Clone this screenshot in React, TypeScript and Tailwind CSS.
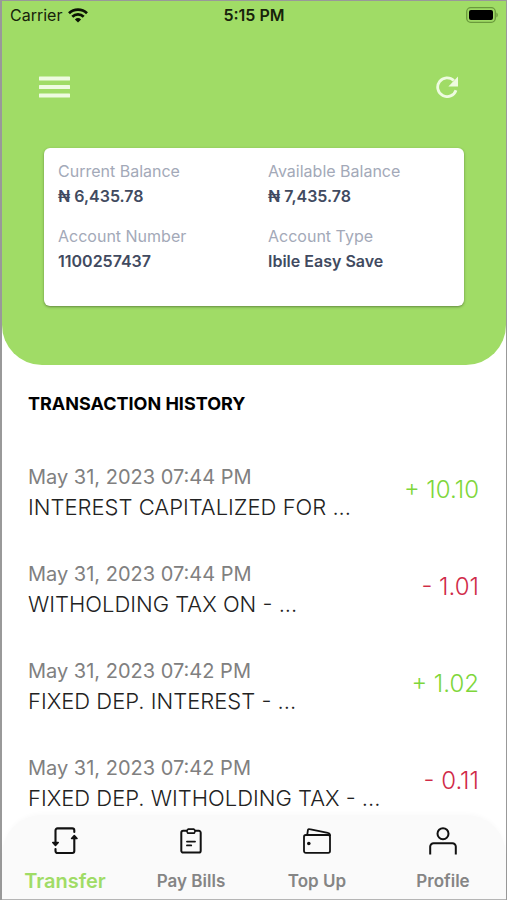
import React from "react";

const accountDetails = [
  { label: "Current Balance", value: "₦ 6,435.78" },
  { label: "Available Balance", value: "₦ 7,435.78" },
  { label: "Account Number", value: "1100257437" },
  { label: "Account Type", value: "Ibile Easy Save" },
];

const transactions = [
  {
    id: 1,
    date: "May 31, 2023 07:44 PM",
    title: "INTEREST CAPITALIZED FOR ...",
    amount: "+ 10.10",
    credit: true,
  },
  {
    id: 2,
    date: "May 31, 2023 07:44 PM",
    title: "WITHOLDING TAX ON - ...",
    amount: "- 1.01",
    credit: false,
  },
  {
    id: 3,
    date: "May 31, 2023 07:42 PM",
    title: "FIXED DEP. INTEREST - ...",
    amount: "+ 1.02",
    credit: true,
  },
  {
    id: 4,
    date: "May 31, 2023 07:42 PM",
    title: "FIXED DEP. WITHOLDING TAX - ...",
    amount: "- 0.11",
    credit: false,
  },
];

const tabs = [
  { name: "Transfer", icon: <TransferIcon /> },
  { name: "Pay Bills", icon: <ClipboardIcon /> },
  { name: "Top Up", icon: <WalletIcon /> },
  { name: "Profile", icon: <ProfileIcon /> },
];

export default function App() {
  return (
    <div className="flex min-h-screen flex-col border-t border-r border-l-2 border-[#999999] bg-white font-['Inter','Open_Sans',sans-serif]">
      <Header />
      <TransactionHistory />
      <TabBar />
    </div>
  );
}

function Header() {
  return (
    <header className="rounded-b-[40px] bg-[#a0dc66] pb-[59px]">
      <StatusBar />
      <div className="flex items-center justify-between pt-10 pr-12 pl-[37px]">
        <button aria-label="Menu" className="flex h-9 items-center">
          <MenuIcon />
        </button>
        <button aria-label="Refresh" className="flex h-9 items-center">
          <RefreshIcon />
        </button>
      </div>
      <dl className="mx-[42px] mt-[43px] grid grid-cols-2 gap-y-[15px] rounded-md bg-white pt-[11px] pb-8 shadow-sm shadow-black/30">
        {accountDetails.map(({ label, value }) => (
          <div key={label} className="pl-3.5">
            <dt className="text-base leading-[25px] text-[#a3a9b8]">{label}</dt>
            <dd className="text-base leading-[25px] font-semibold text-[#414a60]">
              {value}
            </dd>
          </div>
        ))}
      </dl>
    </header>
  );
}

function StatusBar() {
  return (
    <div className="grid h-7 grid-cols-3 items-center px-2 text-[#17230a]">
      <div className="flex items-center gap-1.5 text-base">
        <span>Carrier</span>
        <WifiIcon />
      </div>
      <span className="text-center text-base font-semibold">5:15 PM</span>
      <div className="flex justify-end">
        <BatteryIcon />
      </div>
    </div>
  );
}

function TransactionHistory() {
  return (
    <main className="pr-[27px] pl-[26px]">
      <h1 className="pt-[27px] text-lg leading-6 font-bold text-black">
        TRANSACTION HISTORY
      </h1>
      <ul className="mt-[46px] flex flex-col gap-[37px]">
        {transactions.map(({ id, date, title, amount, credit }) => (
          <li key={id} className="flex items-center justify-between">
            <div>
              <p className="text-xl leading-[30px] text-[#808080]">{date}</p>
              <p className="text-[22px] leading-[30px] font-light text-[#222222]">
                {title}
              </p>
            </div>
            <span
              className={`pb-1 text-2xl font-light ${credit ? "text-[#7ed63a]" : "text-[#d02a48]"}`}
            >
              {amount}
            </span>
          </li>
        ))}
      </ul>
    </main>
  );
}

function TabBar() {
  const [activeTab, setActiveTab] = React.useState("Transfer");

  return (
    <nav className="sticky bottom-0 mt-auto grid grid-cols-4 rounded-t-[40px] border-b border-[#b5b5b5] bg-[#fafafa] pt-3 shadow-[0_-2px_4px_rgba(0,0,0,0.02)]">
      {tabs.map(({ name, icon }) => (
        <button
          key={name}
          onClick={() => setActiveTab(name)}
          className="flex flex-col items-center gap-3 pb-1 text-[#111111]"
        >
          <span className="flex h-7 items-center">{icon}</span>
          <span
            className={`font-semibold ${activeTab === name ? "text-xl leading-7 text-[#a0dc66]" : "text-[17px] leading-7 text-[#858585]"}`}
          >
            {name}
          </span>
        </button>
      ))}
    </nav>
  );
}

function MenuIcon() {
  return (
    <svg width="31" height="22" viewBox="0 0 31 22" fill="#eefbe0">
      <rect y="0.5" width="31" height="4" rx="0.5" />
      <rect y="9" width="31" height="4" rx="0.5" />
      <rect y="17.5" width="31" height="4" rx="0.5" />
    </svg>
  );
}

function RefreshIcon() {
  return (
    <svg width="22" height="22" viewBox="0 0 22 22" fill="none">
      <path
        d="M20 14.2A9.4 9.4 0 1 1 17.8 4.6"
        stroke="#eefbe0"
        strokeWidth="2.8"
      />
      <path d="M22 .6v9.8h-9.6z" fill="#eefbe0" />
    </svg>
  );
}

function WifiIcon() {
  return (
    <svg width="20" height="15" viewBox="0 0 20 15" fill="none" stroke="#0b1204">
      <path d="M1 5.2a12.9 12.9 0 0 1 18 0" strokeWidth="2.7" />
      <path d="M4.3 8.7a8.2 8.2 0 0 1 11.4 0" strokeWidth="2.7" />
      <path d="M10 14.6 6.9 11.4a4.5 4.5 0 0 1 6.2 0z" fill="#0b1204" stroke="none" />
    </svg>
  );
}

function BatteryIcon() {
  return (
    <svg width="32" height="16" viewBox="0 0 32 16" fill="none">
      <rect x="0.7" y="0.7" width="28.6" height="14.6" rx="4" stroke="#6a9a3c" strokeWidth="1.3" />
      <rect x="3" y="3" width="24" height="10" rx="2" fill="#000000" />
      <path d="M30.4 5.500v5c1.800-.8 1.800-4.200 0-5z" fill="#6a9a3c" />
    </svg>
  );
}

function TransferIcon() {
  return (
    <svg
      width="26"
      height="28"
      viewBox="0 0 26 28"
      fill="none"
      stroke="currentColor"
      strokeWidth="2.1"
      strokeLinecap="round"
    >
      <path d="M3.5 15V3.4a2 2 0 0 1 2-2h14.800a2 2 0 0 1 2 2V5" />
      <path d="M22.3 11.500V24a2 2 0 0 1-2 2H5.500a2 2 0 0 1-2-2v-2" />
      <path
        d="M.8 15.500h5.400l-2.700 3z"
        fill="currentColor"
        strokeLinejoin="round"
        strokeWidth="1.6"
      />
      <path
        d="M19.600 11.500H25l-2.700-3z"
        fill="currentColor"
        strokeLinejoin="round"
        strokeWidth="1.6"
      />
    </svg>
  );
}

function ClipboardIcon() {
  return (
    <svg
      width="22"
      height="26"
      viewBox="0 0 22 26"
      fill="none"
      stroke="currentColor"
      strokeWidth="2"
      strokeLinecap="round"
      strokeLinejoin="round"
    >
      <path d="M6.5 2.8H3.2a1.900 1.900 0 0 0-1.900 1.900v18a1.900 1.900 0 0 0 1.900 1.900h15.600a1.900 1.900 0 0 0 1.900-1.900v-18a1.900 1.900 0 0 0-1.900-1.900h-3.300" />
      <path d="M8.2 1.1h5.600l1.500 1.700-1 2.300H7.700l-1-2.300z" strokeWidth="1.600" />
      <path d="M7 13.600h8M7 17.400h4.200" strokeWidth="1.900" />
    </svg>
  );
}

function WalletIcon() {
  return (
    <svg
      width="28"
      height="26"
      viewBox="0 0 28 26"
      fill="none"
      stroke="currentColor"
      strokeWidth="1.800"
      strokeLinejoin="round"
    >
      <rect x="1" y="7" width="26" height="17.800" rx="1.800" />
      <path d="M4.200 7 4.900 2.200a1.200 1.200 0 0 1 1.500-1L24.800 4.800A2.600 2.600 0 0 1 27 8" />
      <circle cx="5.800" cy="15.500" r="1.800" fill="currentColor" stroke="none" />
    </svg>
  );
}

function ProfileIcon() {
  return (
    <svg
      width="28"
      height="28"
      viewBox="0 0 28 28"
      fill="none"
      stroke="currentColor"
      strokeWidth="2"
    >
      <circle cx="14" cy="6.700" r="5.500" />
      <path d="M1.200 27.500v-7.900a3.400 3.400 0 0 1 3.400-3.400h18.800a3.400 3.400 0 0 1 3.400 3.400v7.900" />
    </svg>
  );
}
